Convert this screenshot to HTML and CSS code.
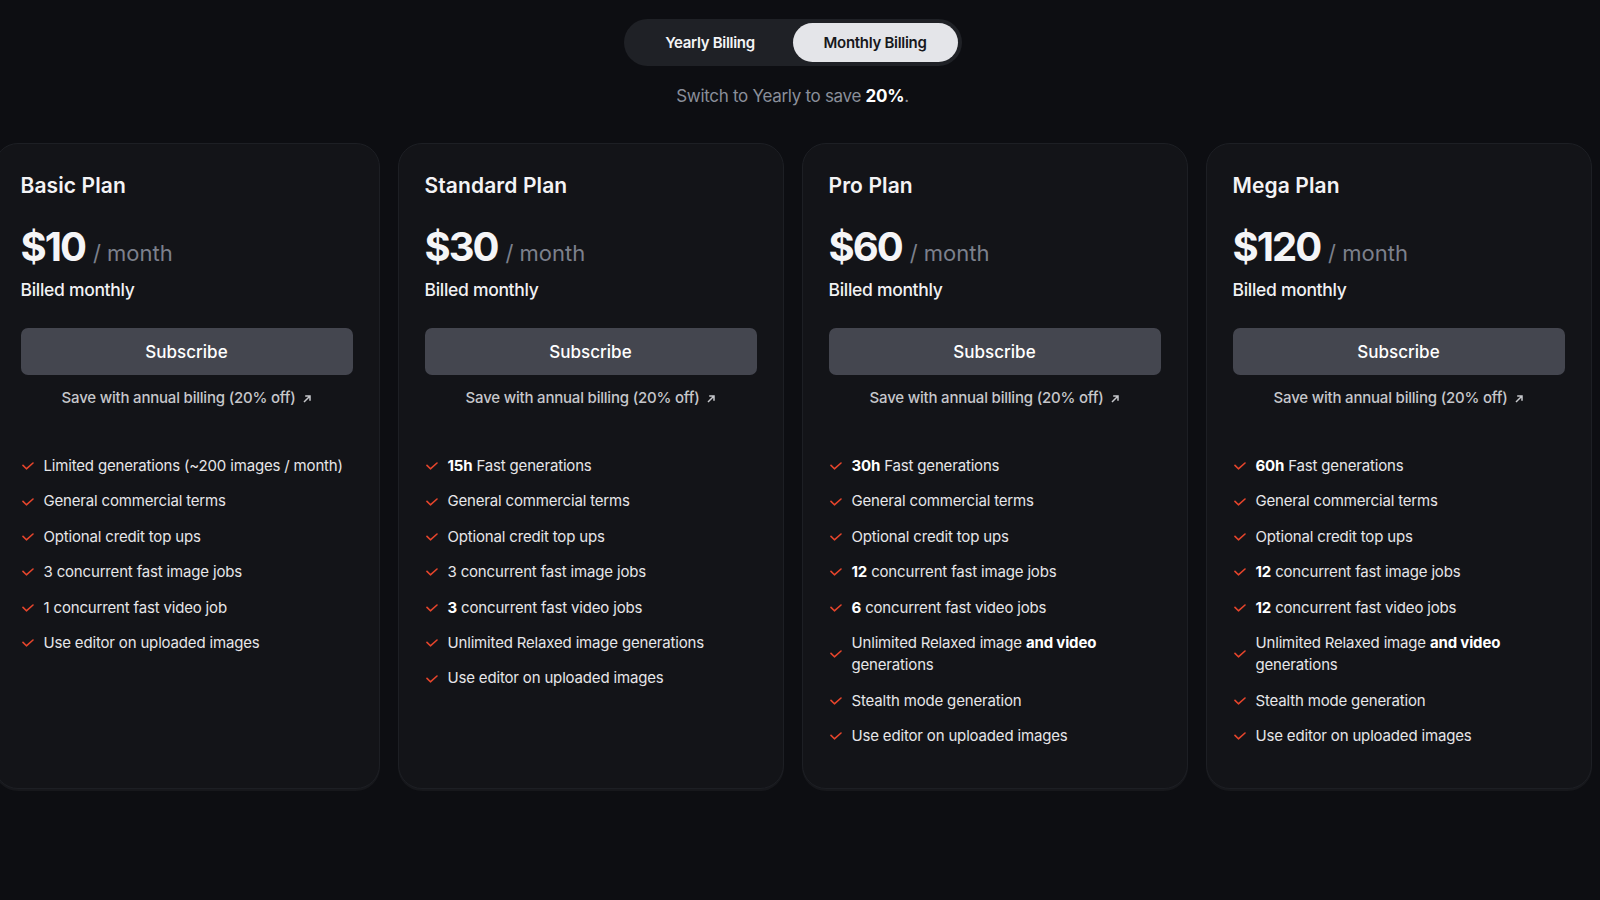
FILE: index.html
```html
<!DOCTYPE html>
<html lang="en">
<head>
<meta charset="utf-8">
<title>Pricing</title>
<link rel="stylesheet" href="styles.css">
</head>
<body>
<div class="page">
  <div class="toggle">
    <button class="toggle-btn">Yearly Billing</button>
    <button class="toggle-btn active">Monthly Billing</button>
  </div>
  <p class="hint">Switch to Yearly to save <strong>20%</strong>.</p>

  <div class="plans">
    <section class="card">
      <h2 class="plan-name">Basic Plan</h2>
      <div class="price-row"><span class="amount">$10</span><span class="per">/ month</span></div>
      <div class="billed">Billed monthly</div>
      <button class="subscribe">Subscribe</button>
      <div class="save">Save with annual billing (20% off) <svg class="arrow" viewBox="0 0 8 8" width="8" height="8"><path d="M1 7L7 1M2.2 1H7V5.8"/></svg></div>
      <ul class="features">
        <li><svg class="check" viewBox="0 0 12 8" width="12" height="8"><path d="M1 3.4L4.4 6.8L11 1"/></svg><span>Limited generations (~200 images / month)</span></li>
        <li><svg class="check" viewBox="0 0 12 8" width="12" height="8"><path d="M1 3.4L4.4 6.8L11 1"/></svg><span>General commercial terms</span></li>
        <li><svg class="check" viewBox="0 0 12 8" width="12" height="8"><path d="M1 3.4L4.4 6.8L11 1"/></svg><span>Optional credit top ups</span></li>
        <li><svg class="check" viewBox="0 0 12 8" width="12" height="8"><path d="M1 3.4L4.4 6.8L11 1"/></svg><span>3 concurrent fast image jobs</span></li>
        <li><svg class="check" viewBox="0 0 12 8" width="12" height="8"><path d="M1 3.4L4.4 6.8L11 1"/></svg><span>1 concurrent fast video job</span></li>
        <li><svg class="check" viewBox="0 0 12 8" width="12" height="8"><path d="M1 3.4L4.4 6.8L11 1"/></svg><span>Use editor on uploaded images</span></li>
      </ul>
    </section>

    <section class="card">
      <h2 class="plan-name">Standard Plan</h2>
      <div class="price-row"><span class="amount">$30</span><span class="per">/ month</span></div>
      <div class="billed">Billed monthly</div>
      <button class="subscribe">Subscribe</button>
      <div class="save">Save with annual billing (20% off) <svg class="arrow" viewBox="0 0 8 8" width="8" height="8"><path d="M1 7L7 1M2.2 1H7V5.8"/></svg></div>
      <ul class="features">
        <li><svg class="check" viewBox="0 0 12 8" width="12" height="8"><path d="M1 3.4L4.4 6.8L11 1"/></svg><span><b>15h</b> Fast generations</span></li>
        <li><svg class="check" viewBox="0 0 12 8" width="12" height="8"><path d="M1 3.4L4.4 6.8L11 1"/></svg><span>General commercial terms</span></li>
        <li><svg class="check" viewBox="0 0 12 8" width="12" height="8"><path d="M1 3.4L4.4 6.8L11 1"/></svg><span>Optional credit top ups</span></li>
        <li><svg class="check" viewBox="0 0 12 8" width="12" height="8"><path d="M1 3.4L4.4 6.8L11 1"/></svg><span>3 concurrent fast image jobs</span></li>
        <li><svg class="check" viewBox="0 0 12 8" width="12" height="8"><path d="M1 3.4L4.4 6.8L11 1"/></svg><span><b>3</b> concurrent fast video jobs</span></li>
        <li><svg class="check" viewBox="0 0 12 8" width="12" height="8"><path d="M1 3.4L4.4 6.8L11 1"/></svg><span>Unlimited Relaxed image generations</span></li>
        <li><svg class="check" viewBox="0 0 12 8" width="12" height="8"><path d="M1 3.4L4.4 6.8L11 1"/></svg><span>Use editor on uploaded images</span></li>
      </ul>
    </section>

    <section class="card">
      <h2 class="plan-name">Pro Plan</h2>
      <div class="price-row"><span class="amount">$60</span><span class="per">/ month</span></div>
      <div class="billed">Billed monthly</div>
      <button class="subscribe">Subscribe</button>
      <div class="save">Save with annual billing (20% off) <svg class="arrow" viewBox="0 0 8 8" width="8" height="8"><path d="M1 7L7 1M2.2 1H7V5.8"/></svg></div>
      <ul class="features">
        <li><svg class="check" viewBox="0 0 12 8" width="12" height="8"><path d="M1 3.4L4.4 6.8L11 1"/></svg><span><b>30h</b> Fast generations</span></li>
        <li><svg class="check" viewBox="0 0 12 8" width="12" height="8"><path d="M1 3.4L4.4 6.8L11 1"/></svg><span>General commercial terms</span></li>
        <li><svg class="check" viewBox="0 0 12 8" width="12" height="8"><path d="M1 3.4L4.4 6.8L11 1"/></svg><span>Optional credit top ups</span></li>
        <li><svg class="check" viewBox="0 0 12 8" width="12" height="8"><path d="M1 3.4L4.4 6.8L11 1"/></svg><span><b>12</b> concurrent fast image jobs</span></li>
        <li><svg class="check" viewBox="0 0 12 8" width="12" height="8"><path d="M1 3.4L4.4 6.8L11 1"/></svg><span><b>6</b> concurrent fast video jobs</span></li>
        <li><svg class="check" viewBox="0 0 12 8" width="12" height="8"><path d="M1 3.4L4.4 6.8L11 1"/></svg><span>Unlimited Relaxed image <b>and video</b> generations</span></li>
        <li><svg class="check" viewBox="0 0 12 8" width="12" height="8"><path d="M1 3.4L4.4 6.8L11 1"/></svg><span>Stealth mode generation</span></li>
        <li><svg class="check" viewBox="0 0 12 8" width="12" height="8"><path d="M1 3.4L4.4 6.8L11 1"/></svg><span>Use editor on uploaded images</span></li>
      </ul>
    </section>

    <section class="card">
      <h2 class="plan-name">Mega Plan</h2>
      <div class="price-row"><span class="amount">$120</span><span class="per">/ month</span></div>
      <div class="billed">Billed monthly</div>
      <button class="subscribe">Subscribe</button>
      <div class="save">Save with annual billing (20% off) <svg class="arrow" viewBox="0 0 8 8" width="8" height="8"><path d="M1 7L7 1M2.2 1H7V5.8"/></svg></div>
      <ul class="features">
        <li><svg class="check" viewBox="0 0 12 8" width="12" height="8"><path d="M1 3.4L4.4 6.8L11 1"/></svg><span><b>60h</b> Fast generations</span></li>
        <li><svg class="check" viewBox="0 0 12 8" width="12" height="8"><path d="M1 3.4L4.4 6.8L11 1"/></svg><span>General commercial terms</span></li>
        <li><svg class="check" viewBox="0 0 12 8" width="12" height="8"><path d="M1 3.4L4.4 6.8L11 1"/></svg><span>Optional credit top ups</span></li>
        <li><svg class="check" viewBox="0 0 12 8" width="12" height="8"><path d="M1 3.4L4.4 6.8L11 1"/></svg><span><b>12</b> concurrent fast image jobs</span></li>
        <li><svg class="check" viewBox="0 0 12 8" width="12" height="8"><path d="M1 3.4L4.4 6.8L11 1"/></svg><span><b>12</b> concurrent fast video jobs</span></li>
        <li><svg class="check" viewBox="0 0 12 8" width="12" height="8"><path d="M1 3.4L4.4 6.8L11 1"/></svg><span>Unlimited Relaxed image <b>and video</b> generations</span></li>
        <li><svg class="check" viewBox="0 0 12 8" width="12" height="8"><path d="M1 3.4L4.4 6.8L11 1"/></svg><span>Stealth mode generation</span></li>
        <li><svg class="check" viewBox="0 0 12 8" width="12" height="8"><path d="M1 3.4L4.4 6.8L11 1"/></svg><span>Use editor on uploaded images</span></li>
      </ul>
    </section>
  </div>
</div>
</body>
</html>
```

FILE: styles.css
```css
html, body {
  margin: 0;
  padding: 0;
  background: #0d0e12;
  overflow: hidden;
}

body {
  font-family: Inter, "Liberation Sans", sans-serif;
  color: #ececef;
  height: 900px;
}

.page {
  width: 1585px;
  display: flex;
  flex-direction: column;
  align-items: center;
  padding-top: 19px;
}

.toggle {
  display: flex;
  padding: 4px;
  background: #1f2126;
  border-radius: 24px;
}

.toggle-btn {
  width: 165px;
  height: 39px;
  border: 0;
  border-radius: 20px;
  background: transparent;
  color: #f4f4f6;
  font-family: inherit;
  font-size: 15px;
  font-weight: 600;
  letter-spacing: -0.3px;
  cursor: pointer;
}

.toggle-btn.active {
  background: #e4e5e9;
  color: #17181c;
}

.hint {
  margin: 18px 0 0;
  font-size: 17px;
  line-height: 24px;
  letter-spacing: -0.3px;
  color: #8a8e9a;
}

.hint strong {
  color: #ffffff;
  font-weight: 700;
}

.plans {
  width: 1598px;
  margin-top: 35px;
  display: grid;
  grid-template-columns: repeat(4, 1fr);
  gap: 18px;
}

.card {
  background: #131418;
  border: 1px solid #1d1f24;
  border-radius: 24px;
  padding: 28px 26px 40px;
  box-shadow: 0 2px 0 #17181c;
}

.plan-name {
  margin: 0;
  font-size: 21px;
  line-height: 28px;
  font-weight: 600;
  letter-spacing: 0.1px;
  color: #f3f3f5;
}

.price-row {
  margin-top: 23px;
  display: flex;
  align-items: baseline;
  gap: 8px;
  line-height: 48px;
}

.amount {
  font-size: 40px;
  font-weight: 700;
  color: #f5f5f7;
  letter-spacing: -2px;
}

.per {
  font-size: 22px;
  color: #7c808c;
}

.billed {
  margin-top: 1px;
  font-size: 17.5px;
  line-height: 24px;
  font-weight: 500;
  letter-spacing: -0.3px;
  color: #f1f1f3;
}

.subscribe {
  display: block;
  width: 100%;
  height: 47px;
  margin-top: 26px;
  border: 0;
  border-radius: 7px;
  background: #44464f;
  color: #ffffff;
  font-family: inherit;
  font-size: 17px;
  font-weight: 500;
  cursor: pointer;
}

.save {
  margin-top: 12px;
  font-size: 15px;
  line-height: 22px;
  font-weight: 500;
  letter-spacing: -0.2px;
  color: #c6c7cb;
  text-align: center;
}

.arrow {
  margin-left: 4px;
  fill: none;
  stroke: #c6c7cb;
  stroke-width: 1.5;
  vertical-align: 0;
}

.features {
  list-style: none;
  margin: 46px 0 0;
  padding: 0;
  display: flex;
  flex-direction: column;
  gap: 13px;
}

.features li {
  display: flex;
  align-items: center;
  gap: 10px;
  font-size: 15px;
  line-height: 22.4px;
  letter-spacing: -0.17px;
  color: #e6e6e9;
}

.features b {
  font-weight: 700;
  color: #ffffff;
}

.check {
  flex: none;
  margin-left: 1px;
  fill: none;
  stroke: #e5452c;
  stroke-width: 1.6;
  stroke-linecap: round;
  stroke-linejoin: round;
}
```
